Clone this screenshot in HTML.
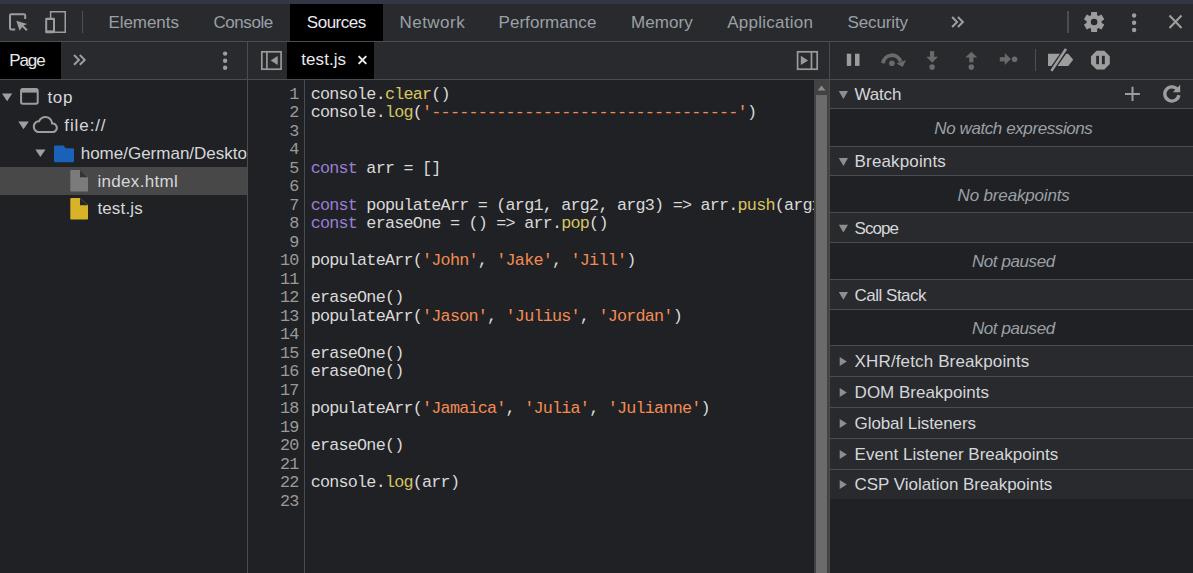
<!DOCTYPE html>
<html><head><meta charset="utf-8"><style>
*{margin:0;padding:0;box-sizing:border-box}
html,body{width:1193px;height:573px;overflow:hidden;background:#202124}
body{position:relative;font-family:"Liberation Sans",sans-serif}
.a{position:absolute}
.t{position:absolute;white-space:nowrap;line-height:normal}
.cl{position:absolute;left:310.7px;white-space:pre;font-family:"Liberation Mono",monospace;font-size:16.8px;letter-spacing:-0.790px;color:#d9d9d9;line-height:normal}
.ln{position:absolute;left:248px;width:50.5px;text-align:right;white-space:pre;font-family:"Liberation Mono",monospace;font-size:16.8px;letter-spacing:-0.790px;color:#9a9a9a;line-height:normal}
.k{color:#9a7fd5} .s{color:#f28b54} .p{color:#d9c560}
svg{position:absolute;overflow:visible}
</style></head><body>
<!-- top strip -->
<div class="a" style="left:0;top:0;width:1193px;height:4px;background:#333646"></div>
<!-- main toolbar -->
<div class="a" style="left:0;top:4px;width:1193px;height:37px;background:#292a2d"></div>
<div class="a" style="left:290px;top:4px;width:93px;height:37px;background:#000"></div>
<div class="a" style="left:0;top:41px;width:1193px;height:1px;background:#494c50"></div>
<!-- sub toolbar -->
<div class="a" style="left:0;top:42px;width:1193px;height:37px;background:#292a2d"></div>
<div class="a" style="left:0;top:42px;width:61px;height:37px;background:#000"></div>
<div class="a" style="left:287px;top:42px;width:87px;height:37px;background:#000"></div>
<div class="a" style="left:0;top:79px;width:1193px;height:1px;background:#494c50"></div>
<div class="a" style="left:247px;top:42px;width:1px;height:531px;background:#494c50"></div>
<div class="a" style="left:829px;top:42px;width:1px;height:531px;background:#494c50"></div>
<!-- tree selected -->
<div class="a" style="left:0;top:167px;width:247px;height:28px;background:#484848"></div>
<!-- gutter line -->
<div class="a" style="left:304px;top:80px;width:1px;height:493px;background:#494c50"></div>
<!-- scrollbar -->
<div class="a" style="left:814px;top:80px;width:15px;height:493px;background:#424242"></div>
<div class="a" style="left:816px;top:95px;width:11px;height:478px;background:#6b6b6b"></div>
<svg style="left:814px;top:80px" width="15" height="15"><polygon points="3.5,10.5 11.5,10.5 7.5,5.5" fill="#8a8a8a"/></svg>
<!-- right pane sections -->
<div id="rp"></div>
<div class="a" style="left:830px;top:80px;width:363px;height:28px;background:#292a2d"></div>
<div class="a" style="left:830px;top:108px;width:363px;height:1px;background:#494c50"></div>
<div class="a" style="left:830px;top:109px;width:363px;height:37px;background:#202124"></div>
<div class="a" style="left:830px;top:146px;width:363px;height:1px;background:#494c50"></div>
<div class="a" style="left:830px;top:147px;width:363px;height:28px;background:#292a2d"></div>
<div class="a" style="left:830px;top:175px;width:363px;height:1px;background:#494c50"></div>
<div class="a" style="left:830px;top:176px;width:363px;height:36px;background:#202124"></div>
<div class="a" style="left:830px;top:212px;width:363px;height:1px;background:#494c50"></div>
<div class="a" style="left:830px;top:213px;width:363px;height:29px;background:#292a2d"></div>
<div class="a" style="left:830px;top:242px;width:363px;height:1px;background:#494c50"></div>
<div class="a" style="left:830px;top:243px;width:363px;height:36px;background:#202124"></div>
<div class="a" style="left:830px;top:279px;width:363px;height:1px;background:#494c50"></div>
<div class="a" style="left:830px;top:280px;width:363px;height:29px;background:#292a2d"></div>
<div class="a" style="left:830px;top:309px;width:363px;height:1px;background:#494c50"></div>
<div class="a" style="left:830px;top:310px;width:363px;height:35px;background:#202124"></div>
<div class="a" style="left:830px;top:345px;width:363px;height:1px;background:#494c50"></div>
<div class="a" style="left:830px;top:346px;width:363px;height:30px;background:#292a2d"></div>
<div class="a" style="left:830px;top:376px;width:363px;height:1px;background:#494c50"></div>
<div class="a" style="left:830px;top:377px;width:363px;height:30px;background:#292a2d"></div>
<div class="a" style="left:830px;top:407px;width:363px;height:1px;background:#494c50"></div>
<div class="a" style="left:830px;top:408px;width:363px;height:30px;background:#292a2d"></div>
<div class="a" style="left:830px;top:438px;width:363px;height:1px;background:#494c50"></div>
<div class="a" style="left:830px;top:439px;width:363px;height:30px;background:#292a2d"></div>
<div class="a" style="left:830px;top:469px;width:363px;height:1px;background:#494c50"></div>
<div class="a" style="left:830px;top:470px;width:363px;height:29px;background:#292a2d"></div>

<svg style="left:0px;top:8px" width="40" height="30" viewBox="0 8 40 30"><path d="M15.2 29.4H11.2a1.2 1.2 0 0 1-1.2-1.2V15.4a1.2 1.2 0 0 1 1.2-1.2H24a1.2 1.2 0 0 1 1.2 1.2V19" fill="none" stroke="#9d9d9d" stroke-width="2"/>
<polygon points="16.3,20.8 27.2,23.9 23.6,25.4 27.6,29.4 26.2,30.9 22.2,26.9 19.6,30.8" fill="#9d9d9d"/></svg>
<svg style="left:40px;top:8px" width="40" height="30" viewBox="40 8 40 30"><path d="M50.6 18V11.75H65.25V32.25H54.8" fill="none" stroke="#9d9d9d" stroke-width="1.5"/>
<rect x="45.2" y="17.8" width="9.8" height="15.4" rx="1.2" fill="#9d9d9d"/><rect x="47.2" y="20" width="5.8" height="10.4" fill="#292a2d"/></svg>
<div class="a" style="left:82px;top:11px;width:1px;height:22px;background:#4f4f50"></div>
<div class="a" style="left:1067px;top:11px;width:2px;height:22px;background:#4a4d52"></div>
<div class="a" style="left:1035px;top:49px;width:1px;height:22px;background:#4f4f50"></div>
<svg style="left:940px;top:8px" width="40" height="30" viewBox="940 8 40 30"><path d="M952.1 17L957.1 22L952.1 27M957.9 17L962.9 22L957.9 27" fill="none" stroke="#9aa0a6" stroke-width="2" stroke-linejoin="miter"/></svg>
<svg style="left:60px;top:45px" width="40" height="30" viewBox="60 45 40 30"><path d="M74.0 55.0L78.9 59.9L74.0 64.8M79.8 55.0L84.7 59.9L79.8 64.8" fill="none" stroke="#9a9fa5" stroke-width="2" stroke-linejoin="miter"/></svg>
<svg style="left:1080px;top:8px" width="30" height="30" viewBox="1080 8 30 30"><circle cx="1094.1" cy="22" r="7.6" fill="#9d9d9d"/><rect x="1091.1" y="11.9" width="6" height="6" rx="0.6" fill="#9d9d9d" transform="rotate(0 1094.1 22)"/><rect x="1091.1" y="11.9" width="6" height="6" rx="0.6" fill="#9d9d9d" transform="rotate(60 1094.1 22)"/><rect x="1091.1" y="11.9" width="6" height="6" rx="0.6" fill="#9d9d9d" transform="rotate(120 1094.1 22)"/><rect x="1091.1" y="11.9" width="6" height="6" rx="0.6" fill="#9d9d9d" transform="rotate(180 1094.1 22)"/><rect x="1091.1" y="11.9" width="6" height="6" rx="0.6" fill="#9d9d9d" transform="rotate(240 1094.1 22)"/><rect x="1091.1" y="11.9" width="6" height="6" rx="0.6" fill="#9d9d9d" transform="rotate(300 1094.1 22)"/><circle cx="1094.1" cy="22" r="3.3" fill="#292a2d"/></svg>
<svg style="left:1125px;top:8px" width="20" height="30" viewBox="1125 8 20 30"><circle cx="1134.1" cy="15.5" r="2.2" fill="#9d9d9d"/><circle cx="1134.1" cy="22.7" r="2.2" fill="#9d9d9d"/><circle cx="1134.1" cy="30.0" r="2.2" fill="#9d9d9d"/></svg>
<svg style="left:215px;top:45px" width="20" height="30" viewBox="215 45 20 30"><circle cx="225.1" cy="53.6" r="2.2" fill="#9d9d9d"/><circle cx="225.1" cy="60.8" r="2.2" fill="#9d9d9d"/><circle cx="225.1" cy="67.8" r="2.2" fill="#9d9d9d"/></svg>
<svg style="left:1160px;top:8px" width="30" height="30" viewBox="1160 8 30 30"><path d="M1169.5 15.6L1181.5 27.9M1181.5 15.6L1169.5 27.9" stroke="#9d9d9d" stroke-width="2.2"/></svg>
<svg style="left:255px;top:45px" width="35" height="30" viewBox="255 45 35 30"><rect x="261.8" y="51.8" width="19.3" height="17.4" fill="none" stroke="#9a9a9a" stroke-width="1.7"/><path d="M266.9 52V69" stroke="#9a9a9a" stroke-width="1.7"/><polygon points="277.7,56 277.7,65.1 270.7,60.5" fill="#9a9a9a"/></svg>
<svg style="left:790px;top:45px" width="35" height="30" viewBox="790 45 35 30"><rect x="797.6" y="51.8" width="19.6" height="17.4" fill="none" stroke="#9a9a9a" stroke-width="1.7"/><path d="M811.5 52V69" stroke="#9a9a9a" stroke-width="1.7"/><polygon points="800.8,55.8 800.8,65.1 808.1,60.4" fill="#9a9a9a"/></svg>
<svg style="left:350px;top:45px" width="25" height="30" viewBox="350 45 25 30"><path d="M358.6 56.1L366.3 63.9M366.3 56.1L358.6 63.9" stroke="#e8eaed" stroke-width="2"/></svg>
<svg style="left:840px;top:45px" width="25" height="30" viewBox="840 45 25 30"><rect x="846.8" y="53.7" width="4.4" height="12.2" fill="#9d9d9d"/><rect x="855" y="53.7" width="4.5" height="12.2" fill="#9d9d9d"/></svg>
<svg style="left:875px;top:45px" width="35" height="30" viewBox="875 45 35 30"><path d="M883.05 63.3A9 9 0 0 1 900.6 61.6" fill="none" stroke="#6a6a6a" stroke-width="3.8"/><polygon points="896.6,63.6 906,60 902.6,67" fill="#6a6a6a"/><circle cx="891.9" cy="63.3" r="2.8" fill="#6a6a6a"/></svg>
<svg style="left:920px;top:45px" width="25" height="30" viewBox="920 45 25 30"><path d="M932.1 51.1V58" stroke="#6a6a6a" stroke-width="4.2"/><polygon points="926.3,56.8 938.1,56.8 932.2,62.8" fill="#6a6a6a"/><circle cx="932.1" cy="67.1" r="2.8" fill="#6a6a6a"/></svg>
<svg style="left:960px;top:45px" width="25" height="30" viewBox="960 45 25 30"><path d="M971.3 62.3V56" stroke="#6a6a6a" stroke-width="4.2"/><polygon points="965.2,57.6 977.3,57.6 971.3,51.7" fill="#6a6a6a"/><circle cx="971.3" cy="67.1" r="2.8" fill="#6a6a6a"/></svg>
<svg style="left:995px;top:45px" width="25" height="30" viewBox="995 45 25 30"><path d="M999.8 59.3H1006" stroke="#6a6a6a" stroke-width="4.2"/><polygon points="1004.8,53 1004.8,65.1 1010.8,59.1" fill="#6a6a6a"/><circle cx="1014.6" cy="59.2" r="2.8" fill="#6a6a6a"/></svg>
<svg style="left:1040px;top:45px" width="40" height="30" viewBox="1040 45 40 30"><polygon points="1048,53.8 1068.2,53.8 1073.2,59.8 1068.2,65.9 1048,65.9" fill="#9d9d9d"/>
<path d="M1050.3 72L1067.2 47.8" stroke="#292a2d" stroke-width="5"/><path d="M1051.4 70.9L1066 48.9" stroke="#9d9d9d" stroke-width="2.6"/></svg>
<svg style="left:1085px;top:45px" width="30" height="30" viewBox="1085 45 30 30"><polygon points="1109.82,63.95 1104.30,69.47 1096.50,69.47 1090.98,63.95 1090.98,56.15 1096.50,50.63 1104.30,50.63 1109.82,56.15" fill="#9d9d9d"/><rect x="1096.2" y="55.8" width="2.8" height="8.4" fill="#292a2d"/><rect x="1101.9" y="55.8" width="2.9" height="8.4" fill="#292a2d"/></svg>
<svg style="left:0px;top:85px" width="50" height="80" viewBox="0 85 50 80"><polygon points="2,93.6 12.2,93.6 7.1,101.2" fill="#9aa0a6"/><polygon points="18.3,121.6 28.8,121.6 23.55,129.3" fill="#9aa0a6"/><polygon points="35.3,149.4 45.5,149.4 40.4,157" fill="#9aa0a6"/></svg>
<svg style="left:15px;top:85px" width="30" height="25" viewBox="15 85 30 25"><rect x="21.1" y="89.1" width="16.6" height="14.6" rx="1.6" fill="none" stroke="#9d9d9d" stroke-width="2"/><rect x="21" y="89" width="16.8" height="3.6" fill="#9d9d9d"/></svg>
<svg style="left:30px;top:110px" width="35" height="30" viewBox="30 110 35 30"><g transform="translate(32.8 111.6) scale(1.045 1.075)"><path d="M19.35 10.04C18.67 6.59 15.64 4 12 4 9.11 4 6.6 5.64 5.35 8.04 2.34 8.36 0 10.91 0 14c0 3.31 2.69 6 6 6h13c2.76 0 5-2.24 5-5 0-2.64-2.05-4.780-4.65-4.96zM19 18H6c-2.21 0-4-1.790-4-4s1.79-4 4-4h.71C7.37 7.69 9.48 6 12 6c3.04 0 5.5 2.46 5.5 5.5v.5H19c1.66 0 3 1.34 3 3s-1.34 3-3 3z" fill="#9d9d9d"/></g></svg>
<svg style="left:50px;top:140px" width="30" height="30" viewBox="50 140 30 30"><path d="M54 146.8a1.2 1.2 0 0 1 1.2-1.2H63.5L65.6 148.2H72.8a1.2 1.2 0 0 1 1.2 1.2V161.1a1.2 1.2 0 0 1-1.2 1.2H55.2a1.2 1.2 0 0 1-1.2-1.2z" fill="#1a62b9"/></svg>
<svg style="left:65px;top:165px" width="30" height="60" viewBox="65 165 30 60"><path d="M71.5 169.9H79.89999999999999L88 177.1V190.4a1.2 1.2 0 0 1-1.2 1.2H71.5a1.2 1.2 0 0 1-1.2-1.2V171.1a1.2 1.2 0 0 1 1.2-1.2z" fill="#7b7b7b"/><polygon points="80.0,170.1 80.0,177.20000000000002 87.9,177.20000000000002" fill="#333333"/><path d="M71.5 197.9H79.89999999999999L88 205.1V218.4a1.2 1.2 0 0 1-1.2 1.2H71.5a1.2 1.2 0 0 1-1.2-1.2V199.1a1.2 1.2 0 0 1 1.2-1.2z" fill="#d8b328"/><polygon points="80.0,198.1 80.0,205.20000000000002 87.9,205.20000000000002" fill="#262626"/></svg>
<svg style="left:830px;top:80px" width="30" height="240" viewBox="830 80 30 240"><polygon points="838.8,91.1 848,91.1 843.4,98.9" fill="#8e8e8e"/><polygon points="838.8,158.1 848,158.1 843.4,165.9" fill="#8e8e8e"/><polygon points="838.8,224.8 848,224.8 843.4,232.6" fill="#8e8e8e"/><polygon points="838.8,292 848,292 843.4,299.8" fill="#8e8e8e"/></svg>
<svg style="left:830px;top:340px" width="30" height="170" viewBox="830 340 30 170"><polygon points="839.7,356.9 846.8,361.5 839.7,366.1" fill="#8e8e8e"/><polygon points="839.7,387.9 846.8,392.5 839.7,397.1" fill="#8e8e8e"/><polygon points="839.7,418.9 846.8,423.5 839.7,428.1" fill="#8e8e8e"/><polygon points="839.7,449.9 846.8,454.5 839.7,459.1" fill="#8e8e8e"/><polygon points="839.7,479.9 846.8,484.5 839.7,489.1" fill="#8e8e8e"/></svg>
<svg style="left:1120px;top:80px" width="25" height="28" viewBox="1120 80 25 28"><path d="M1125 94H1139.9M1132.5 86.8V101" stroke="#9d9d9d" stroke-width="2"/></svg>
<svg style="left:1160px;top:80px" width="30" height="28" viewBox="1160 80 30 28"><path d="M1177.3 89.3A7.1 7.1 0 1 0 1178.9 95.1" fill="none" stroke="#9d9d9d" stroke-width="3.3"/><polygon points="1180.2,84.8 1180.2,92.2 1172.8,92.2" fill="#9d9d9d"/></svg>

<div class="t" style="left:108.40px;top:13.00px;font-size:17px;color:#9aa0a6;letter-spacing:-0.050px;">Elements</div>
<div class="t" style="left:213.40px;top:13.00px;font-size:17px;color:#9aa0a6;letter-spacing:-0.408px;">Console</div>
<div class="t" style="left:306.80px;top:13.00px;font-size:17px;color:#e8eaed;letter-spacing:-0.475px;">Sources</div>
<div class="t" style="left:399.50px;top:13.00px;font-size:17px;color:#9aa0a6;letter-spacing:0.467px;">Network</div>
<div class="t" style="left:498.50px;top:13.00px;font-size:17px;color:#9aa0a6;letter-spacing:0.055px;">Performance</div>
<div class="t" style="left:630.90px;top:13.00px;font-size:17px;color:#9aa0a6;letter-spacing:0.100px;">Memory</div>
<div class="t" style="left:727.20px;top:13.00px;font-size:17px;color:#9aa0a6;letter-spacing:0.265px;">Application</div>
<div class="t" style="left:847.50px;top:13.00px;font-size:17px;color:#9aa0a6;letter-spacing:-0.114px;">Security</div>
<div class="t" style="left:9.20px;top:51.00px;font-size:17px;color:#e8eaed;letter-spacing:-1.083px;">Page</div>
<div class="t" style="left:301.30px;top:50.00px;font-size:17px;color:#e8eaed;letter-spacing:0.067px;">test.js</div>
<div class="t" style="left:47.40px;top:88.00px;font-size:17px;color:#d5d7da;letter-spacing:0.675px;">top</div>
<div class="t" style="left:64.30px;top:116.00px;font-size:17px;color:#d5d7da;letter-spacing:0.900px;">file://</div>
<div class="t" style="left:80.70px;top:144.00px;font-size:17px;color:#d5d7da;letter-spacing:0.000px;width:166.30px;overflow:hidden;">home/German/Desktop/test</div>
<div class="t" style="left:97.40px;top:172.00px;font-size:17px;color:#d5d7da;letter-spacing:0.333px;">index.html</div>
<div class="t" style="left:97.40px;top:199.00px;font-size:17px;color:#d5d7da;letter-spacing:0.150px;">test.js</div>
<div class="t" style="left:854.60px;top:85.00px;font-size:17px;color:#d5d7da;letter-spacing:-0.200px;">Watch</div>
<div class="t" style="left:854.60px;top:152.00px;font-size:17px;color:#d5d7da;letter-spacing:0.145px;">Breakpoints</div>
<div class="t" style="left:854.60px;top:219.00px;font-size:17px;color:#d5d7da;letter-spacing:-0.963px;">Scope</div>
<div class="t" style="left:854.60px;top:286.00px;font-size:17px;color:#d5d7da;letter-spacing:-0.506px;">Call Stack</div>
<div class="t" style="left:854.60px;top:352.00px;font-size:17px;color:#d5d7da;letter-spacing:0.135px;">XHR/fetch Breakpoints</div>
<div class="t" style="left:854.60px;top:383.00px;font-size:17px;color:#d5d7da;letter-spacing:0.011px;">DOM Breakpoints</div>
<div class="t" style="left:854.60px;top:414.00px;font-size:17px;color:#d5d7da;letter-spacing:-0.097px;">Global Listeners</div>
<div class="t" style="left:854.60px;top:445.00px;font-size:17px;color:#d5d7da;letter-spacing:0.022px;">Event Listener Breakpoints</div>
<div class="t" style="left:854.60px;top:475.00px;font-size:17px;color:#d5d7da;letter-spacing:-0.044px;">CSP Violation Breakpoints</div>
<div class="t" style="left:934.30px;top:119.00px;font-size:17px;color:#9aa0a6;letter-spacing:-0.408px;font-style:italic;">No watch expressions</div>
<div class="t" style="left:957.60px;top:186.00px;font-size:17px;color:#9aa0a6;letter-spacing:-0.165px;font-style:italic;">No breakpoints</div>
<div class="t" style="left:971.90px;top:252.00px;font-size:17px;color:#9aa0a6;letter-spacing:-0.411px;font-style:italic;">Not paused</div>
<div class="t" style="left:971.90px;top:319.00px;font-size:17px;color:#9aa0a6;letter-spacing:-0.411px;font-style:italic;">Not paused</div>

<div class="a" style="left:0;top:0;width:814px;height:573px;overflow:hidden">
<div class="cl" style="top:84.90px">console.<span class="p">clear</span>()</div>
<div class="ln" style="top:84.90px">1</div>
<div class="cl" style="top:103.39px">console.<span class="p">log</span>(<span class="s">'---------------------------------'</span>)</div>
<div class="ln" style="top:103.39px">2</div>
<div class="cl" style="top:121.88px"></div>
<div class="ln" style="top:121.88px">3</div>
<div class="cl" style="top:140.37px"></div>
<div class="ln" style="top:140.37px">4</div>
<div class="cl" style="top:158.86px"><span class="k">const</span> arr = []</div>
<div class="ln" style="top:158.86px">5</div>
<div class="cl" style="top:177.35px"></div>
<div class="ln" style="top:177.35px">6</div>
<div class="cl" style="top:195.84px"><span class="k">const</span> populateArr = (arg1, arg2, arg3) => arr.<span class="p">push</span>(arg1, arg2, arg3)</div>
<div class="ln" style="top:195.84px">7</div>
<div class="cl" style="top:214.33px"><span class="k">const</span> eraseOne = () => arr.<span class="p">pop</span>()</div>
<div class="ln" style="top:214.33px">8</div>
<div class="cl" style="top:232.82px"></div>
<div class="ln" style="top:232.82px">9</div>
<div class="cl" style="top:251.31px">populateArr(<span class="s">'John'</span>, <span class="s">'Jake'</span>, <span class="s">'Jill'</span>)</div>
<div class="ln" style="top:251.31px">10</div>
<div class="cl" style="top:269.80px"></div>
<div class="ln" style="top:269.80px">11</div>
<div class="cl" style="top:288.29px">eraseOne()</div>
<div class="ln" style="top:288.29px">12</div>
<div class="cl" style="top:306.78px">populateArr(<span class="s">'Jason'</span>, <span class="s">'Julius'</span>, <span class="s">'Jordan'</span>)</div>
<div class="ln" style="top:306.78px">13</div>
<div class="cl" style="top:325.27px"></div>
<div class="ln" style="top:325.27px">14</div>
<div class="cl" style="top:343.76px">eraseOne()</div>
<div class="ln" style="top:343.76px">15</div>
<div class="cl" style="top:362.25px">eraseOne()</div>
<div class="ln" style="top:362.25px">16</div>
<div class="cl" style="top:380.74px"></div>
<div class="ln" style="top:380.74px">17</div>
<div class="cl" style="top:399.23px">populateArr(<span class="s">'Jamaica'</span>, <span class="s">'Julia'</span>, <span class="s">'Julianne'</span>)</div>
<div class="ln" style="top:399.23px">18</div>
<div class="cl" style="top:417.72px"></div>
<div class="ln" style="top:417.72px">19</div>
<div class="cl" style="top:436.21px">eraseOne()</div>
<div class="ln" style="top:436.21px">20</div>
<div class="cl" style="top:454.70px"></div>
<div class="ln" style="top:454.70px">21</div>
<div class="cl" style="top:473.19px">console.<span class="p">log</span>(arr)</div>
<div class="ln" style="top:473.19px">22</div>
<div class="cl" style="top:491.68px"></div>
<div class="ln" style="top:491.68px">23</div>
</div>
</body></html>
